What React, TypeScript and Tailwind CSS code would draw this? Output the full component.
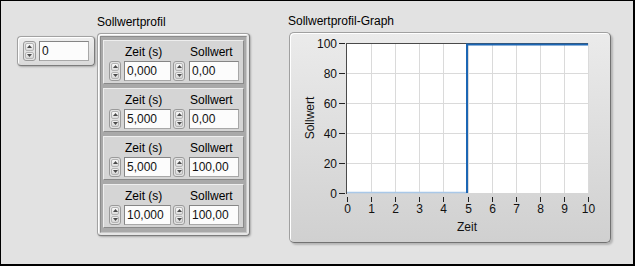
import React from "react";

const Spinner = ({ w = 12 }: { w?: number }) => (
  <div
    className={`flex flex-col ${w === 13 ? "w-[13px]" : "w-[12px]"} h-[20px] rounded-[3px] border border-[#9a9a9a] bg-[#e2e2e2] p-[1px] gap-[1px]`}
  >
    <div className="flex-1 flex items-center justify-center rounded-[2px] border border-[#b4b4b4] bg-linear-to-b from-[#fafafa] to-[#dcdcdc]">
      <svg width="5" height="3" viewBox="0 0 5 3">
        <path d="M0 3 L2.5 0 L5 3 Z" fill="#4a4a4a" />
      </svg>
    </div>
    <div className="flex-1 flex items-center justify-center rounded-[2px] border border-[#b4b4b4] bg-linear-to-b from-[#f4f4f4] to-[#d6d6d6]">
      <svg width="5" height="3" viewBox="0 0 5 3">
        <path d="M0 0 L2.5 3 L5 0 Z" fill="#4a4a4a" />
      </svg>
    </div>
  </div>
);

const Field = ({ value, w }: { value: string; w: string }) => (
  <div
    className={`${w} h-[20px] border border-[#858585] border-b-[#a8a8a8] border-r-[#a8a8a8] bg-[#fcfcfc] pl-[2px] text-[12px] leading-[18px] text-[#111]`}
  >
    {value}
  </div>
);

const Cluster = ({ t, v }: { t: string; v: string }) => (
  <div className="h-[44px] bg-[#d5d5d5] border border-t-[#eeeeee] border-l-[#eeeeee] border-b-[#8a8a8a] border-r-[#8a8a8a] pt-[4px] pl-[5px]">
    <div className="flex h-[14px] leading-[14px] text-[12px] mb-[2px] text-black">
      <span className="w-[81px] pl-[16px] whitespace-nowrap">Zeit (s)</span>
      <span className="whitespace-nowrap">Sollwert</span>
    </div>
    <div className="flex">
      <Spinner />
      <div className="ml-[3px]">
        <Field value={t} w="w-[47px]" />
      </div>
      <div className="ml-[2px]">
        <Spinner />
      </div>
      <div className="ml-[4px]">
        <Field value={v} w="w-[50px]" />
      </div>
    </div>
  </div>
);

const Graph = () => {
  const x0 = 57;
  const x1 = 298;
  const y0 = 160;
  const y1 = 10;
  const xs = Array.from({ length: 11 }, (_, i) => x0 + ((x1 - x0) * i) / 10);
  const yv = [0, 20, 40, 60, 80, 100];
  const yp = (v: number) => y0 - ((y0 - y1) * v) / 100;
  const x5 = xs[5];
  return (
    <svg width="320" height="209" viewBox="0 0 320 209" className="block">
      <rect x={x0} y={y1} width={x1 - x0} height={y0 - y1} fill="#ffffff" />
      {xs.slice(1).map((x, i) => (
        <line key={"gx" + i} x1={Math.round(x) + 0.5} x2={Math.round(x) + 0.5} y1={y1} y2={y0} stroke="#dadada" strokeWidth="1" />
      ))}
      {[20, 40, 60, 80].map((v) => (
        <line key={"gy" + v} x1={x0} x2={x1} y1={yp(v) + 0.5} y2={yp(v) + 0.5} stroke="#dadada" strokeWidth="1" />
      ))}
      {/* plot border top/left */}
      <line x1={x0 - 0.5} x2={x0 - 0.5} y1={y1} y2={y0 + 1} stroke="#4a4a4a" strokeWidth="1" />
      <line x1={x0 - 1} x2={x1} y1={y1 + 0.5} y2={y1 + 0.5} stroke="#4a4a4a" strokeWidth="1" />
      {/* y ticks and labels */}
      {yv.map((v) => (
        <g key={"y" + v}>
          <line x1={49} x2={55} y1={yp(v) + 0.5} y2={yp(v) + 0.5} stroke="#222" strokeWidth="1" />
          <text x={47} y={yp(v) + 5} textAnchor="end" fontSize="12" fill="#111" fontFamily="'Liberation Sans', Arial, sans-serif">
            {v}
          </text>
        </g>
      ))}
      {/* x ticks and labels */}
      {xs.map((x, i) => (
        <g key={"x" + i}>
          <line x1={Math.round(x) + 0.5} x2={Math.round(x) + 0.5} y1={164} y2={169} stroke="#222" strokeWidth="1" />
          <text x={Math.round(x) + 0.5} y={180} textAnchor="middle" fontSize="12" fill="#111" fontFamily="'Liberation Sans', Arial, sans-serif">
            {i}
          </text>
        </g>
      ))}
      <text x={177} y={198} textAnchor="middle" fontSize="12" fill="#111" fontFamily="'Liberation Sans', Arial, sans-serif">
        Zeit
      </text>
      <text x={24} y={85} transform="rotate(-90 24 85)" textAnchor="middle" fontSize="12" fill="#111" fontFamily="'Liberation Sans', Arial, sans-serif">
        Sollwert
      </text>
      {/* data */}
      <line x1={x0} x2={x5} y1={y0 - 0.5} y2={y0 - 0.5} stroke="#a9c8e8" strokeWidth="1.5" />
      <path d={`M ${x5 - 0.5} ${y0} V ${y1 + 1.5} H ${x1}`} fill="none" stroke="#1c66b4" strokeWidth="2" />
    </svg>
  );
};

export default function App() {
  return (
    <div className="w-[635px] h-[266px] bg-[#e2e2e2] border-l border-t border-r-2 border-b-2 border-black flex items-start font-['Liberation_Sans',Arial,sans-serif] text-black">
      {/* numeric control */}
      <div className="ml-[16px] mt-[35px] w-[78px] h-[30px] rounded-[4px] border border-[#a2a2a2] border-b-[#7c7c7c] border-r-[#7c7c7c] bg-linear-to-b from-[#eeeeee] to-[#dadada] shadow-[1px_1px_2px_rgba(0,0,0,0.25),inset_1px_1px_0_#ffffff] flex items-center px-[5px]">
        <Spinner w={13} />
        <div className="ml-[3px]">
          <Field value="0" w="w-[50px]" />
        </div>
      </div>

      {/* array */}
      <div className="ml-[2px] mt-[14px] flex flex-col">
        <div className="h-[14px] leading-[14px] text-[12px] whitespace-nowrap">Sollwertprofil</div>
        <div className="mt-[4px] w-[153px] h-[203px] rounded-[4px] border border-[#a2a2a2] border-b-[#7c7c7c] border-r-[#7c7c7c] bg-[#e6e6e6] shadow-[1px_1px_2px_rgba(0,0,0,0.25),inset_1px_1px_0_#ffffff] p-[2px]">
          <div className="w-[147px] h-[197px] bg-[#a9a9a9] border border-[#8c8c8c] border-b-[#c8c8c8] border-r-[#c8c8c8] px-[2px] pt-[3px] pb-[4px] flex flex-col gap-[4px]">
            <Cluster t="0,000" v="0,00" />
            <Cluster t="5,000" v="0,00" />
            <Cluster t="5,000" v="100,00" />
            <Cluster t="10,000" v="100,00" />
          </div>
        </div>
      </div>

      {/* graph */}
      <div className="ml-[38px] mt-[13px] flex flex-col">
        <div className="h-[14px] leading-[14px] text-[12px] whitespace-nowrap">Sollwertprofil-Graph</div>
        <div className="ml-[1px] mt-[4px] w-[322px] h-[211px] rounded-[5px] border border-[#a0a0a0] border-b-[#727272] border-r-[#727272] bg-linear-to-b from-[#ebebeb] to-[#d0d0d0] shadow-[2px_2px_2px_rgba(0,0,0,0.2),inset_1px_1px_0_#ffffff]">
          <Graph />
        </div>
      </div>
    </div>
  );
}
